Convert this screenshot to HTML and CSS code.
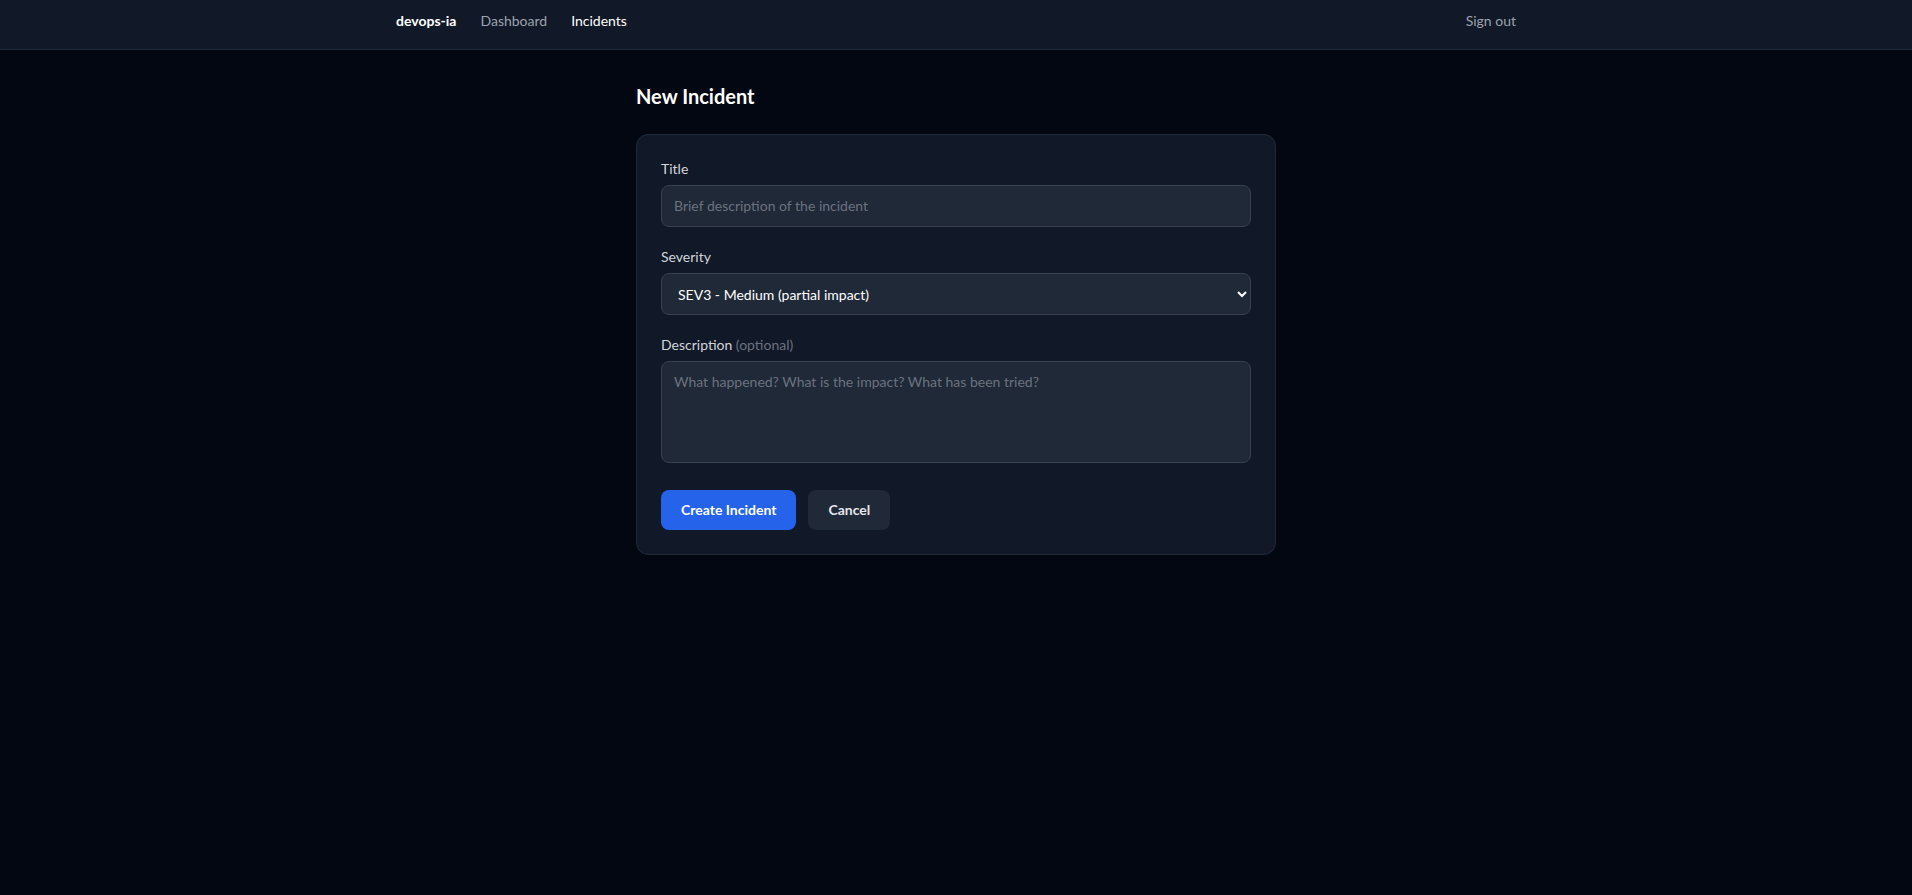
FILE: index.html
```html
<!DOCTYPE html>
<html lang="en">
<head>
  <meta charset="UTF-8">
  <meta name="viewport" content="width=device-width, initial-scale=1">
  <title>New Incident - devops-ia</title>
  <link rel="stylesheet" href="styles.css">
</head>
<body>

  <!-- Top bar -->
  <nav class="topbar">
    <div class="topbar-inner">
      <div class="topbar-left">
        <a href="#" class="brand">devops-ia</a>
        <a href="#" class="nav-link">Dashboard</a>
        <a href="#" class="nav-link active">Incidents</a>
      </div>
      <button type="button" class="signout">Sign out</button>
    </div>
  </nav>

  <!-- New incident form -->
  <main class="page">
    <h1>New Incident</h1>

    <form class="card">
      <div class="field">
        <label for="title">Title</label>
        <input type="text" id="title" class="input" placeholder="Brief description of the incident">
      </div>

      <div class="field">
        <label for="severity">Severity</label>
        <select id="severity" class="input select">
          <option value="sev1">SEV1 - Critical (full outage)</option>
          <option value="sev2">SEV2 - High (major impact)</option>
          <option value="sev3" selected>SEV3 - Medium (partial impact)</option>
          <option value="sev4">SEV4 - Low (minor impact)</option>
        </select>
      </div>

      <div class="field">
        <label for="description">Description <span class="muted">(optional)</span></label>
        <textarea id="description" class="input" rows="4" placeholder="What happened? What is the impact? What has been tried?"></textarea>
      </div>

      <div class="actions">
        <button type="submit" class="btn btn-primary">Create Incident</button>
        <a href="#" class="btn btn-secondary">Cancel</a>
      </div>
    </form>
  </main>

</body>
</html>
```

FILE: styles.css
```css
/* Global */
* {
  box-sizing: border-box;
}
body {
  margin: 0;
  background: #030712;
  color: #f3f4f6;
  font-family: Lato, "Noto Sans", sans-serif;
  font-size: 14px;
  line-height: 20px;
}
a {
  text-decoration: none;
  color: inherit;
}

/* Top bar */
.topbar {
  background: #111827;
  border-bottom: 1px solid #1f2937;
}
.topbar-inner {
  max-width: 1152px;
  height: 49px;
  margin: 0 auto;
  padding: 11px 16px 0;
  display: flex;
  align-items: flex-start;
  justify-content: space-between;
}
.topbar-left {
  display: flex;
  align-items: center;
  gap: 24px;
}
.brand {
  font-weight: 700;
  color: #ffffff;
}
.nav-link {
  color: #9ca3af;
}
.nav-link.active {
  color: #ffffff;
}
.signout {
  background: none;
  border: none;
  padding: 0;
  font: inherit;
  color: #9ca3af;
  cursor: pointer;
}

/* Page */
.page {
  max-width: 672px;
  margin: 0 auto;
  padding: 32px 16px;
}
.page h1 {
  margin: 0 0 24px;
  font-size: 20px;
  line-height: 28px;
  font-weight: 700;
  color: #ffffff;
}

/* Form card */
.card {
  background: #111827;
  border: 1px solid #1f2937;
  border-radius: 12px;
  padding: 24px;
  display: flex;
  flex-direction: column;
  gap: 20px;
}
.field label {
  display: block;
  margin-bottom: 6px;
  color: #d1d5db;
}
.muted {
  color: #6b7280;
}
.input {
  display: block;
  width: 100%;
  margin: 0;
  padding: 10px 12px;
  background: #1f2937;
  border: 1px solid #374151;
  border-radius: 8px;
  color: #ffffff;
  font: inherit;
  outline: none;
}
.input::placeholder {
  color: #6b7280;
}
.select {
  color-scheme: dark;
  height: 42px;
}
textarea.input {
  resize: none;
}

/* Buttons */
.actions {
  display: flex;
  gap: 12px;
  padding-top: 7px;
}
.btn {
  display: inline-flex;
  align-items: center;
  height: 40px;
  padding: 0 20px;
  border: none;
  border-radius: 8px;
  font: inherit;
  font-weight: 700;
  cursor: pointer;
}
.btn-primary {
  background: #2563eb;
  color: #ffffff;
}
.btn-secondary {
  background: #1f2937;
  color: #e5e7eb;
}
```
